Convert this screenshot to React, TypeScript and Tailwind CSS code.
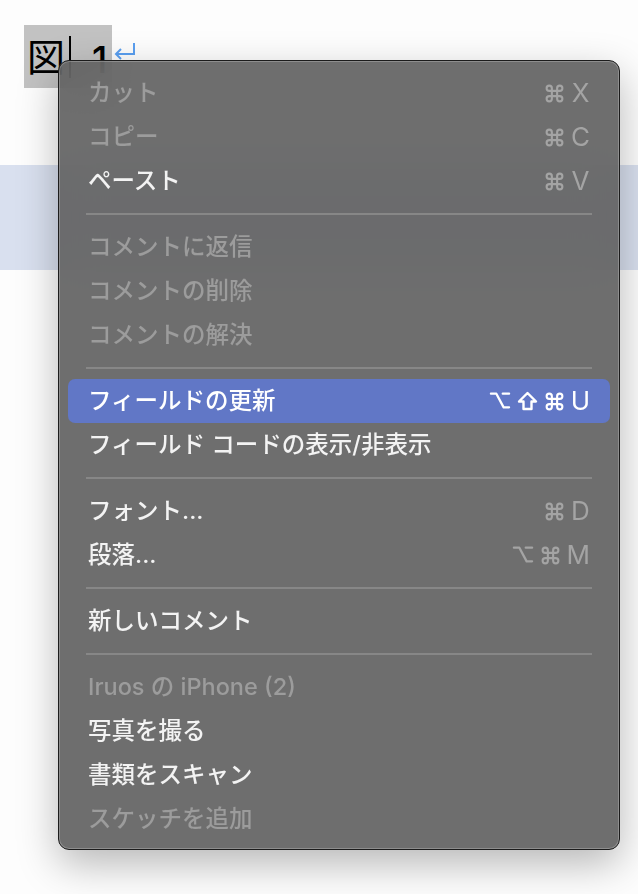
import React from "react"

type Item = {
  label: string
  enabled?: boolean
  highlighted?: boolean
  keys?: string[]
}

type Entry = Item | "sep"

const entries: Entry[] = [
  { label: "カット", keys: ["cmd", "X"] },
  { label: "コピー", keys: ["cmd", "C"] },
  { label: "ペースト", enabled: true, keys: ["cmd", "V"] },
  "sep",
  { label: "コメントに返信" },
  { label: "コメントの削除" },
  { label: "コメントの解決" },
  "sep",
  { label: "フィールドの更新", enabled: true, highlighted: true, keys: ["opt", "shift", "cmd", "U"] },
  { label: "フィールド コードの表示/非表示", enabled: true },
  "sep",
  { label: "フォント...", enabled: true, keys: ["cmd", "D"] },
  { label: "段落...", enabled: true, keys: ["opt", "cmd", "M"] },
  "sep",
  { label: "新しいコメント", enabled: true },
  "sep",
  { label: "Iruos の iPhone (2)" },
  { label: "写真を撮る", enabled: true },
  { label: "書類をスキャン", enabled: true },
  { label: "スケッチを追加" },
]

const font = { fontFamily: "Inter, 'Noto Sans CJK JP', sans-serif" }

function KeyGlyph({ k }: { k: string }) {
  if (k === "cmd")
    return (
      <svg width="21" height="21" viewBox="0 0 24 24" fill="none" stroke="currentColor" strokeWidth="2.4" strokeLinecap="round" strokeLinejoin="round">
        <path d="M9 6a3 3 0 1 0-3 3h12a3 3 0 1 0-3-3v12a3 3 0 1 0 3-3H6a3 3 0 1 0 3 3V6z" />
      </svg>
    )
  if (k === "opt")
    return (
      <svg width="22" height="20" viewBox="0 0 24 22" fill="none" stroke="currentColor" strokeWidth="2.5" strokeLinecap="round" strokeLinejoin="round">
        <path d="M2 3h6l8 15h6" />
        <path d="M15 3h7" />
      </svg>
    )
  if (k === "shift")
    return (
      <svg width="21" height="20" viewBox="0 0 21 20" fill="none" stroke="currentColor" strokeWidth="2.4" strokeLinejoin="round">
        <path d="M10.5 2 L19 10.5 H14.5 V18 H6.5 V10.5 H2 Z" />
      </svg>
    )
  return <span className="text-[26px] leading-none min-w-[19px] text-center">{k}</span>
}

function MenuRow({ item }: { item: Item }) {
  const color = item.highlighted
    ? "bg-[#6177c6] text-white"
    : item.enabled
      ? "text-[#f3f3f3]"
      : "text-[#9c9c9c]"
  const keyColor = item.highlighted ? "text-white" : "text-[#a4a4a4]"
  return (
    <div className={`h-[44px] px-[20px] rounded-[7px] flex items-center justify-between ${color}`}>
      <span className="text-[23.5px] leading-none font-medium">{item.label}</span>
      {item.keys && (
        <span className={`flex items-center gap-[6px] ${keyColor}`}>
          {item.keys.map((k, i) => (
            <KeyGlyph key={i} k={k} />
          ))}
        </span>
      )}
    </div>
  )
}

export default function App() {
  return (
    <div className="relative w-[638px] h-[894px] bg-[#fdfdfd] overflow-hidden" style={font}>
      {/* document */}
      <div className="pt-[25px] pl-[24px] flex items-start">
        <div className="h-[63px] w-[88px] bg-[#c2c2c2] flex items-center">
          <span className="text-[38px] leading-none text-black ml-[3px]">図</span>
          <span className="w-[2px] h-[42px] bg-black ml-[4px]" />
          <span className="text-[37px] font-medium leading-none text-black ml-[21px] mt-[6px]">1</span>
        </div>
        <svg width="24" height="18" viewBox="0 0 24 18" className="mt-[17px] ml-[1px]" fill="none" stroke="#5a9ff0" strokeWidth="2">
          <path d="M21 1v11H3" />
          <path d="M8 7l-5 5 5 5" />
        </svg>
      </div>
      <div className="mt-[77px] h-[105px] bg-[#d9e0ef]" />

      {/* context menu */}
      <div className="absolute left-[58px] top-[60px] w-[562px] h-[790px] rounded-[11px] border border-[#1c1c1c] bg-[rgba(94,94,94,0.9)] backdrop-blur-xl shadow-[inset_0_0_0_1px_rgba(255,255,255,0.22),0_14px_40px_rgba(0,0,0,0.28)] px-[9px] pt-[10px] pb-[10px]">
        {entries.map((e, i) =>
          e === "sep" ? (
            <div key={i} className="h-[22px] flex items-center px-[18px]">
              <div className="h-[2px] w-full bg-[#878787]" />
            </div>
          ) : (
            <MenuRow key={i} item={e} />
          )
        )}
      </div>
    </div>
  )
}
